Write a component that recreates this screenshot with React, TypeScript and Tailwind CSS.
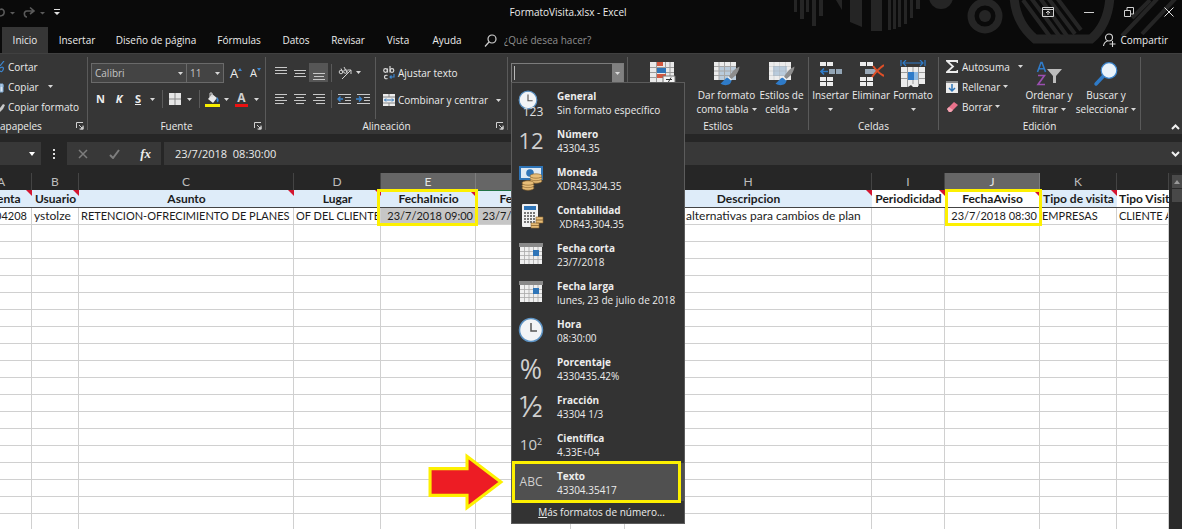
import React from 'react';

type P = { children?: React.ReactNode };

const Caret = ({ className = '' }: { className?: string }) => (
  <svg viewBox="0 0 5 3" className={'inline-block h-[3px] w-[5px] shrink-0 fill-[#d8d8d8] ' + className} aria-hidden="true">
    <path d="M0 0h5L2.500 3z" />
  </svg>
);

const Launcher = () => (
  <svg viewBox="0 0 8 8" className="h-[8px] w-[8px]" fill="none" stroke="#d0d0d0" aria-hidden="true">
    <path d="M.5 6V.5H7M3 3l3 3M7 3.5V7H3.5" />
    <path d="M7.500 4v3.500H4z" fill="#d0d0d0" stroke="none" />
  </svg>
);

const Lines = ({ widths, align = 'l', top = 0, gap = 3 }: { widths: number[]; align?: string; top?: number; gap?: number }) => (
  <svg viewBox="0 0 14 14" className="h-[14px] w-[14px]" fill="#c8c8c8" aria-hidden="true">
    {widths.map((w, i) => (
      <rect key={i} x={align === 'l' ? 1 : align === 'c' ? 7 - w / 2 : 13 - w} y={top + i * gap} width={w} height={1} />
    ))}
  </svg>
);

const Indent = ({ right = false }: { right?: boolean }) => (
  <svg viewBox="0 0 15 13" className="h-[13px] w-[15px]" aria-hidden="true">
    <path d="M1 1.500h13M8 4.500h6M8 7.500h6M1 10.500h13" stroke="#c8c8c8" />
    {right ? (
      <path d="M0 6h5M3 3.500 5.500 6 3 8.500" stroke="#3d86cf" strokeWidth="1.400" fill="none" />
    ) : (
      <path d="M6 6H1M3.500 3.500 1 6l2.500 2.500" stroke="#3d86cf" strokeWidth="1.400" fill="none" />
    )}
  </svg>
);

const Group = ({ label, width, launcher, children, labelClass = 'text-center' }: P & { label: string; width: string; launcher?: boolean; labelClass?: string }) => (
  <section aria-label={label} className={'flex shrink-0 flex-col border-r border-[#5a5a5a] ' + width}>
    <div className="flex min-h-0 flex-1">{children}</div>
    <div className="relative -mb-[3px] shrink-0">
      <div className={'h-[14px] leading-[14px] ' + labelClass}>{label}</div>
      {launcher && (
        <button aria-label={label + ': más opciones'} className="absolute right-[3px] top-[3px]">
          <Launcher />
        </button>
      )}
    </div>
  </section>
);

const BigButton = ({ icon, a, b, width, caret = true }: { icon: React.ReactNode; a: string; b?: string; width: string; caret?: boolean }) => (
  <button className={'flex shrink-0 flex-col items-center pt-[2px] ' + width}>
    <span className="flex h-[29px] shrink-0 items-center">{icon}</span>
    <span className="h-[14px] shrink-0 whitespace-nowrap leading-[14px]">{a}</span>
    <span className="flex h-[14px] shrink-0 items-center gap-[3px] whitespace-nowrap leading-[14px]">
      {b}
      {caret && <Caret />}
    </span>
  </button>
);

const CondIcon = () => (
  <svg viewBox="0 0 26 26" className="h-[26px] w-[26px]" aria-hidden="true">
    <path d="M0 1h24v21H0z" fill="#e9e9e9" />
    <path d="M6.500 1v21M15.500 1v21M20 1v21M0 6.500h24M0 11.500h24M0 16.500h24" stroke="#9b9b9b" />
    <path d="M7 1h6v4H7zM7 13h9v4H7z" fill="#d2573f" />
    <path d="M7 7h9v5H7z" fill="#2f75b8" />
    <path d="M13 15h12v10H13z" fill="#f4f4f4" stroke="#777" />
    <path d="M16 18.500h6M16 21.500h6M21 16.500l-4 7" stroke="#333" />
  </svg>
);

const BrushGrid = ({ fill }: { fill: boolean }) => (
  <svg viewBox="0 0 28 27" className="h-[27px] w-[28px]" aria-hidden="true">
    <path d="M1 2h22v18H1z" fill="#ececec" />
    <path d={fill ? 'M5 6h14v10H5z' : 'M6 6h17v14H6z'} fill="#b9cbdc" />
    <path d="M6 2v18M11.500 2v18M17.500 2v18M1 6.500h22M1 11h22M1 15.500h22" stroke="#a6a6a6" strokeWidth={fill ? 0.3 : 1} />
    <path d="M26.500 6.500c-5 2-9 7-10.500 10.500l2.500 2c4-3 7.500-7 8-12.500z" fill="#8d8d8d" />
    <path d="M15.500 17.500c-3 0-4 3-8 6 4 3 11 2 11-3.500z" fill="#2f7bc8" />
    <path d="m15 17 3.500 3" stroke="#eee" strokeWidth="1.500" />
  </svg>
);

const InsertIcon = ({ del = false }: { del?: boolean }) => (
  <svg viewBox="0 0 26 26" className="h-[26px] w-[26px]" aria-hidden="true">
    <g fill="#ececec">
      <path d="M2 1h6v4H2zM9 1h6v4H9zM2 16h6v4H2zM9 16h6v4H9zM2 21h6v4H2zM9 21h6v4H9z" />
    </g>
    {del ? (
      <>
        <path d="M7 8h11v5H7z" fill="#9aa9b8" />
        <path d="M15 5c3 4 7 8 11 10M26 4c-5 3-9 8-12 12" stroke="#e04f27" strokeWidth="2" fill="none" />
      </>
    ) : (
      <>
        <path d="M11 8h6v5h-6zM18 8h6v5h-6z" fill="#93a5b5" />
        <path d="M10 10.500H3M6 7.500 3 10.500l3 3" stroke="#2f7bc8" strokeWidth="1.700" fill="none" />
      </>
    )}
  </svg>
);

const FormatIcon = () => (
  <svg viewBox="0 0 26 28" className="h-[28px] w-[26px]" aria-hidden="true">
    <path d="M3 3h20M6 0 3 3l3 3M20 0l3 3-3 3M1 0v6M25 0v6" stroke="#2f7bc8" strokeWidth="1.200" fill="none" />
    <path d="M1 7h24v17h-7v3h-5l-2-2-3 2H1z" fill="#ececec" />
    <path d="M7.500 7v20M13 7v17M18.500 7v19M1 12.500h24M1 18.500h24" stroke="#9b9b9b" />
    <path d="M8 12h10v8H8z" fill="#2f7bc8" />
    <path d="M14 12h4v8h-4z" fill="#8fbbe4" />
  </svg>
);

const SortIcon = () => (
  <svg viewBox="0 0 26 26" className="h-[26px] w-[26px]" fill="none" aria-hidden="true">
    <path d="M1.500 11 5 1.500h1L9.500 11M2.800 7.800h5.400" stroke="#2f7bc8" strokeWidth="1.600" />
    <path d="M2 14.500h6.500L2 23.500h7" stroke="#9a4fb0" strokeWidth="1.600" />
    <path d="M11 8h15l-6 7v7h-3v-7z" fill="#bdbdbd" />
  </svg>
);

const FindIcon = () => (
  <svg viewBox="0 0 26 26" className="h-[26px] w-[26px]" aria-hidden="true">
    <path d="M10.500 15 3 23" stroke="#2f7bc8" strokeWidth="3.500" strokeLinecap="round" />
    <circle cx="16" cy="9.500" r="7.800" fill="#eaf3fb" stroke="#3d86cf" strokeWidth="1.200" />
  </svg>
);

const Clock = ({ size }: { size: string }) => (
  <svg viewBox="0 0 26 26" className={size} aria-hidden="true">
    <circle cx="13" cy="13" r="11.500" fill="#f2f4f6" stroke="#5d93c4" strokeWidth="1.500" />
    <path d="M13 6v8h6" stroke="#555" strokeWidth="1.500" fill="none" />
  </svg>
);

const Coins = () => (
  <g fill="#e7bd78" stroke="#8f6a34" strokeWidth=".7">
    <ellipse cx="18" cy="16" rx="6" ry="2.200" />
    <ellipse cx="18" cy="13.500" rx="6" ry="2.200" />
    <ellipse cx="18" cy="11" rx="6" ry="2.200" />
    <ellipse cx="10" cy="23" rx="6" ry="2.200" />
    <ellipse cx="10" cy="20.500" rx="6" ry="2.200" />
    <ellipse cx="10" cy="18" rx="6" ry="2.200" />
  </g>
);

const MoneyIcon = () => (
  <svg viewBox="0 0 26 26" className="h-[26px] w-[26px]" aria-hidden="true">
    <path d="M1 1h24v14H1z" fill="#2f75b8" />
    <path d="M3 3h20v10H3z" fill="#dfeaf4" />
    <circle cx="12" cy="8" r="3.800" fill="#2f75b8" />
    <path d="M1 1h4L1 5zM25 1h-4l4 4zM1 15h4l-4-4z" fill="#2f75b8" />
    <Coins />
  </svg>
);

const CalcIcon = () => (
  <svg viewBox="0 0 26 26" className="h-[26px] w-[26px]" aria-hidden="true">
    <rect x="4" y="1" width="16" height="23" rx="1" fill="#f1f1f1" />
    <path d="M6 3h12v4H6z" fill="#2f75b8" />
    <g fill="#777">
      {[9, 12, 15, 18].map((y) => [6, 9, 12, 15].map((x) => <rect key={x + '-' + y} x={x} y={y} width="2" height="2" />))}
    </g>
    <g fill="#e7bd78" stroke="#8f6a34" strokeWidth=".6">
      <path d="M18 14h7v3h-7zM18 17h7v3h-7zM13 20h8v2.500h-8zM13 22.500h8V25h-8z" />
    </g>
  </svg>
);

const CalendarIcon = () => (
  <svg viewBox="0 0 24 22" className="h-[22px] w-[24px]" aria-hidden="true">
    <path d="M0 0h24v4H0z" fill="#8a8a8a" />
    <path d="M1 4h22v17H1z" fill="#f0f0f0" />
    <path d="M5.500 4v17M10 4v17M14.500 4v17M19 4v17M1 8.500h22M1 12.500h22M1 16.500h22" stroke="#a9a9a9" strokeWidth=".8" />
    <path d="M14 7h6v6h-6z" fill="#2f75b8" />
  </svg>
);

const glyph = 'text-[#cfcfcf] leading-none';

const formats: { name: string; sample: string; icon: React.ReactNode }[] = [
  {
    name: 'General',
    sample: 'Sin formato específico',
    icon: (
      <span className="flex flex-col items-center pt-[4px]">
        <span className="-mb-[4px] mr-[6px] flex">
          <Clock size="h-[20px] w-[20px]" />
        </span>
        <span className="pl-[4px] text-[12px] leading-[12px] text-[#e0e0e0]">123</span>
      </span>
    ),
  },
  { name: 'Número', sample: '43304.35', icon: <span className={'text-[22px] ' + glyph}>12</span> },
  { name: 'Moneda', sample: 'XDR43,304.35', icon: <MoneyIcon /> },
  { name: 'Contabilidad', sample: ' XDR43,304.35', icon: <CalcIcon /> },
  { name: 'Fecha corta', sample: '23/7/2018', icon: <CalendarIcon /> },
  { name: 'Fecha larga', sample: 'lunes, 23 de julio de 2018', icon: <CalendarIcon /> },
  { name: 'Hora', sample: '08:30:00', icon: <Clock size="h-[26px] w-[26px]" /> },
  { name: 'Porcentaje', sample: '4330435.42%', icon: <span className={'text-[27px] ' + glyph}>%</span> },
  { name: 'Fracción', sample: '43304 1/3', icon: <span className={'text-[30px] ' + glyph}>½</span> },
  {
    name: 'Científica',
    sample: '4.33E+04',
    icon: (
      <span className={'text-[15px] ' + glyph}>
        10<sup className="text-[9px]">2</sup>
      </span>
    ),
  },
  { name: 'Texto', sample: '43304.35417', icon: <span className={'text-[12px] ' + glyph}>ABC</span> },
];

const FormatMenu = () => (
  <div className="absolute -left-px top-full z-20 w-[174px] border border-[#5c5c5c] bg-[#333333]" role="menu" aria-label="Formato de número">
    {formats.map((f) => {
      const active = f.name === 'Texto';
      return (
        <button
          key={f.name}
          role="menuitem"
          className={'relative flex h-[38px] w-full items-center text-left ' + (active ? 'bg-[#505050]' : '')}
        >
          <span className="flex w-[38px] shrink-0 justify-center">{f.icon}</span>
          <span className="flex flex-col whitespace-pre pl-[7px] pt-[2px] leading-[14px]">
            <b className="font-bold">{f.name}</b>
            <span>{f.sample}</span>
          </span>
          {active && (
            <>
              <span className="absolute -bottom-[2px] -top-[2px] left-0 right-[3px] border-[3px] border-[#fdf001]" />
              <svg viewBox="0 0 74 56" className="absolute -left-[84px] -top-[10px] h-[58px] w-[76px]" aria-hidden="true">
                <path d="M2 15h36V3l33 25-33 25V41H2z" fill="#ed1c24" stroke="#fdf001" strokeWidth="3" />
              </svg>
            </>
          )}
        </button>
      );
    })}
    <button role="menuitem" className="block h-[22px] w-full pl-[7px] text-center leading-[22px]">
      <u>M</u>ás formatos de número...
    </button>
  </div>
);

const Pattern = () => (
  <svg viewBox="0 0 402 53" className="absolute right-0 top-0 h-[53px] w-[402px]" aria-hidden="true">
    <g fill="#252525">
      <path d="M14 0h3v12h-3zM20 0h4v19h-4zM26 0h3v12h-3zM32 0h4v26h-4zM39 0h4v16h-4zM56 0h6v10zM70 0h12v27l-12-5zM91 0h11v31H91zM108 0h3v30h-3zM113 0h3v29h-3zM118 0h3v27h-3zM124 0h3v24h-3zM130 0h3v18h-3zM136 0h4v9h-4z" />
      <circle cx="161" cy="-3" r="12" />
      <circle cx="205" cy="16" r="6" />
    </g>
    <circle cx="205" cy="16" r="14" fill="none" stroke="#252525" strokeWidth="7" />
    <g fill="none" stroke="#252525">
      <path d="M234 -4c1 20 9 33 21 43h56c12-10 18-24 19-43" strokeWidth="9" />
      <path d="m243 0 28 38M251-2l29 39M260-2l27 38M268-2l27 36M277-2l24 32" strokeWidth="4" />
      <path d="m342 36 36-38M362 34l34-36M352 18l18-18" strokeWidth="4" />
    </g>
  </svg>
);

const TitleBar = () => (
  <header className="relative bg-[#0a0a0a]">
    <Pattern />
    <div className="relative grid h-[27px] grid-cols-3 items-center pb-[3px]">
      <div className="flex items-center gap-[6px]">
        <svg viewBox="0 0 48 12" className="h-[12px] w-[48px]" fill="none" stroke="#5a5a5a" strokeWidth="1.600" aria-hidden="true">
          <path d="M0 3.500c5-2 6 6 0 6.500M34 5h-7c-4 0-3 6 0 6M30 1.500 34 5l-4 3" />
          <path d="M10 6h5l-2.500 2.500zM40 6h5l-2.500 2.500z" fill="#5a5a5a" stroke="none" />
        </svg>
        <svg viewBox="0 0 6 6" className="h-[6px] w-[6px] fill-[#e0e0e0]" aria-hidden="true">
          <path d="M0 0h6v1H0zM0 3h6L3 6z" />
        </svg>
      </div>
      <h1 className="pr-[46px] text-center">FormatoVisita.xlsx - Excel</h1>
      <div className="flex items-center justify-end gap-[30px] pr-[8px]">
        <button aria-label="Opciones de presentación de la cinta">
          <svg viewBox="0 0 12 10" className="h-[10px] w-[12px]" fill="none" stroke="#d0d0d0" aria-hidden="true">
            <path d="M.5.500h11v9H.5zM.5 2.500h11M6 8V4M4 6l2-2 2 2" />
          </svg>
        </button>
        <button aria-label="Minimizar">
          <svg viewBox="0 0 10 10" className="h-[10px] w-[10px]" stroke="#d0d0d0" aria-hidden="true">
            <path d="M0 5.500h10" />
          </svg>
        </button>
        <button aria-label="Restaurar">
          <svg viewBox="0 0 10 10" className="h-[10px] w-[10px]" fill="none" stroke="#d0d0d0" aria-hidden="true">
            <path d="M.5 3.500h6v6h-6zM3 3V.500h6.500V7H7" />
          </svg>
        </button>
        <button aria-label="Cerrar">
          <svg viewBox="0 0 10 10" className="h-[10px] w-[10px]" stroke="#e0e0e0" aria-hidden="true">
            <path d="m.5.500 9 9M9.500.500l-9 9" />
          </svg>
        </button>
      </div>
    </div>
    <nav className="relative flex h-[26px] items-stretch pl-[2px]">
      <button className="w-[46px] bg-[#363636]">Inicio</button>
      <button className="w-[58px]">Insertar</button>
      <button className="w-[100px] whitespace-nowrap">Diseño de página</button>
      <button className="w-[66px]">Fórmulas</button>
      <button className="w-[48px]">Datos</button>
      <button className="w-[56px]">Revisar</button>
      <button className="w-[44px]">Vista</button>
      <button className="w-[54px]">Ayuda</button>
      <label className="flex items-center gap-[7px] pl-[10px]">
        <svg viewBox="0 0 13 13" className="h-[13px] w-[13px]" fill="none" stroke="#d0d0d0" strokeWidth="1.200" aria-hidden="true">
          <circle cx="8" cy="5" r="4" />
          <path d="M5 8 1 12.500" />
        </svg>
        <input aria-label="¿Qué desea hacer?" placeholder="¿Qué desea hacer?" className="w-[110px] bg-transparent outline-none placeholder:text-[#8f8f8f]" />
      </label>
      <button className="ml-auto flex items-center gap-[4px] pr-[14px]">
        <svg viewBox="0 0 13 14" className="h-[14px] w-[13px]" fill="none" stroke="#d8d8d8" strokeWidth="1.100" aria-hidden="true">
          <circle cx="6" cy="4.500" r="3.500" />
          <path d="M.5 13c.5-3 2-4.500 4-5M9.500 8v6M6.500 11h6" />
        </svg>
        Compartir
      </button>
    </nav>
  </header>
);

const Vline = ({ h = 'h-[18px]' }: { h?: string }) => <span className={'w-px bg-[#5a5a5a] ' + h} />;

const Ribbon = () => (
  <div className="flex h-[81px] border-t border-[#404040] bg-[#363636] pb-[4px] pt-[3px]">
    <Group label="apapeles" width="w-[88px]" launcher labelClass="text-left">
      <div className="flex flex-col items-start gap-px">
        {['Cortar', 'Copiar', 'Copiar formato'].map((t, i) => (
          <button key={t} className="flex h-[19px] items-center whitespace-nowrap">
            <svg viewBox="0 0 8 12" className="h-[12px] w-[8px]" aria-hidden="true">
              {i === 0 && <path d="M0 5l4-5M0 7c3-2 4 0 3 2S1 11 0 10" stroke="#3d86cf" fill="none" strokeWidth="1.200" />}
              {i === 1 && <path d="M0 3h3v8H0zM0 5h4" fill="#dfe8f2" stroke="#7ea9d2" />}
              {i === 2 && <path d="M0 7 3 3l2 1-2 4-3 3z" fill="#c8c8c8" />}
            </svg>
            {t}
            {i === 1 && <Caret className="ml-[9px]" />}
          </button>
        ))}
      </div>
    </Group>

    <Group label="Fuente" width="w-[178px]" launcher>
      <div className="flex flex-col gap-[7px] pl-[3px] pt-[6px]">
        <div className="flex h-[20px] items-center">
          <button className="flex h-full w-[96px] items-center justify-between border border-[#6a6a6a] bg-[#444] px-[3px] text-[#c4c4c4]">
            Calibri <Caret />
          </button>
          <button className="-ml-px flex h-full w-[38px] items-center justify-between border border-[#6a6a6a] bg-[#444] px-[3px] text-[#c4c4c4]">
            11 <Caret />
          </button>
          <button className="ml-[6px] flex w-[20px] items-center" aria-label="Aumentar tamaño de fuente">
            <span className="text-[13px]">A</span>
            <svg viewBox="0 0 4 3" className="mb-[8px] h-[3px] w-[4px] fill-[#3d86cf]" aria-hidden="true"><path d="M0 3h4L2 0z" /></svg>
          </button>
          <button className="flex items-center" aria-label="Disminuir tamaño de fuente">
            <span className="text-[11px]">A</span>
            <svg viewBox="0 0 4 3" className="mb-[8px] h-[3px] w-[4px] fill-[#3d86cf]" aria-hidden="true"><path d="M0 0h4L2 3z" /></svg>
          </button>
        </div>
        <div className="flex h-[18px] items-center text-[11px]">
          <button className="w-[19px] text-center font-bold">N</button>
          <button className="w-[18px] text-center font-bold italic">K</button>
          <button className="w-[20px] text-center font-bold underline">S</button>
          <Caret className="ml-[2px] mr-[7px]" />
          <Vline />
          <svg viewBox="0 0 12 12" className="ml-[6px] mr-[6px] h-[12px] w-[12px]" aria-hidden="true">
            <path d="M0 0h12v12H0z" fill="#e6e6e6" />
            <path d="M6 0v12M0 6h12" stroke="#888" />
          </svg>
          <Caret className="mr-[7px]" />
          <Vline />
          <svg viewBox="0 0 15 15" className="ml-[5px] h-[15px] w-[15px]" aria-hidden="true">
            <path d="m3 7 4-5 5 4-4 5z" fill="#e8e8e8" />
            <path d="M5 5V1h2v4" stroke="#ccc" fill="none" />
            <path d="M12 5c2 2 2 4 1 5s-2-2-1-5z" fill="#3d86cf" />
            <path d="M0 12h15v3H0z" fill="#f7ee00" />
          </svg>
          <Caret className="ml-[4px] mr-[6px]" />
          <button className="flex w-[13px] flex-col items-center border-b-[3px] border-[#ed1111] text-[12px] font-bold leading-[12px] text-[#d0d0d0]">A</button>
          <Caret className="ml-[6px]" />
        </div>
      </div>
    </Group>

    <Group label="Alineación" width="w-[242px]" launcher>
      <div className="flex flex-col gap-[8px] pl-[5px] pt-[6px]">
        <div className="flex h-[19px] items-center">
          <span className="flex w-[19px] justify-center"><Lines widths={[12, 12, 12]} top={1} /></span>
          <span className="flex w-[19px] justify-center"><Lines widths={[12, 10, 12]} align="c" top={4} /></span>
          <span className="flex h-[19px] w-[19px] items-center justify-center bg-[#565656]"><Lines widths={[12, 10, 12]} align="c" top={7} /></span>
          <span className="ml-[3px] flex"><Vline /></span>
          <svg viewBox="0 0 14 14" className="ml-[6px] mr-[4px] h-[14px] w-[14px]" fill="none" stroke="#d0d0d0" aria-hidden="true">
            <path d="M4 13 13 4M13 4v4M13 4H9.500" />
            <circle cx="3" cy="6" r="1.800" />
            <circle cx="7.500" cy="5.500" r="1.800" />
            <path d="m3 2.500 2 4.500M6 1l3 5.500" />
          </svg>
          <Caret />
        </div>
        <div className="flex h-[18px] items-center">
          <span className="flex w-[19px] justify-center"><Lines widths={[12, 9, 12, 9]} top={2} /></span>
          <span className="flex w-[19px] justify-center"><Lines widths={[12, 8, 12, 8]} align="c" top={2} /></span>
          <span className="flex w-[19px] justify-center"><Lines widths={[12, 9, 12, 9]} align="r" top={2} /></span>
          <span className="ml-[3px] flex"><Vline /></span>
          <span className="ml-[5px]"><Indent /></span>
          <span className="ml-[4px]"><Indent right /></span>
        </div>
      </div>
      <div className="ml-[4px] border-l border-[#5a5a5a] pl-[7px] pt-[6px]">
        <button className="flex h-[20px] items-center gap-[3px] whitespace-nowrap">
          <svg viewBox="0 0 12 14" className="h-[14px] w-[12px]" fill="none" stroke="#d8d8d8" strokeWidth="1.200" aria-hidden="true">
            <circle cx="2.500" cy="4.500" r="1.800" />
            <path d="M4.500 2.500v4M7 0v6.500" />
            <circle cx="9" cy="4.500" r="1.800" />
            <path d="M4.500 9.500c-4-1.500-4 4.500 0 3" />
            <path d="M11 8v3H7M8.500 9.500 7 11l1.500 1.500" stroke="#3d86cf" />
          </svg>
          Ajustar texto
        </button>
        <button className="mt-[7px] flex h-[20px] items-center gap-[3px] whitespace-nowrap">
          <svg viewBox="0 0 12 12" className="h-[12px] w-[12px]" aria-hidden="true">
            <path d="M0 0h12v12H0z" fill="#ececec" />
            <path d="M0 3h12M0 9h12M6 0v3M6 9v3" stroke="#888" />
            <path d="M1.500 6h9M3 4.500 1.500 6 3 7.500M9 4.500 10.500 6 9 7.500" stroke="#2f75b8" fill="none" />
          </svg>
          Combinar y centrar
          <Caret className="ml-[5px]" />
        </button>
      </div>
    </Group>

    <Group label="" width="w-[120px]">
      <div className="relative ml-[3px] mt-[6px] flex h-[20px] w-[113px] border border-[#7c7c7c] bg-[#3a3a3a]">
        <input aria-label="Formato de número" className="my-[2px] ml-[2px] min-w-0 flex-1 border-l border-[#b8b8b8] bg-transparent px-[2px] outline-none" />
        <button aria-label="Abrir lista" className="flex w-[11px] items-center justify-center bg-[#808080]"><Caret /></button>
        <FormatMenu />
      </div>
    </Group>

    <Group label="Estilos" width="w-[181px]">
      <BigButton width="w-[69px]" icon={<CondIcon />} a="" b="l" />
      <BigButton width="w-[59px]" icon={<BrushGrid fill={false} />} a="Dar formato" b="como tabla" />
      <BigButton width="w-[51px]" icon={<BrushGrid fill />} a="Estilos de" b="celda" />
    </Group>

    <Group label="Celdas" width="w-[130px]">
      <BigButton width="w-[43px]" icon={<InsertIcon />} a="Insertar" />
      <BigButton width="w-[38px]" icon={<InsertIcon del />} a="Eliminar" />
      <BigButton width="w-[46px]" icon={<FormatIcon />} a="Formato" />
    </Group>

    <Group label="Edición" width="w-[202px]">
      <div className="flex w-[80px] shrink-0 flex-col items-start gap-px pl-[7px]">
        <button className="flex h-[19px] items-center gap-[4px] whitespace-nowrap">
          <svg viewBox="0 0 12 13" className="h-[13px] w-[12px]" fill="none" stroke="#ececec" strokeWidth="1.800" aria-hidden="true">
            <path d="M11.500 3V1H1l6 5.500L1 12h10.500v-2" />
          </svg>
          Autosuma <Caret className="ml-[4px]" />
        </button>
        <button className="flex h-[19px] items-center gap-[4px]">
          <svg viewBox="0 0 12 12" className="h-[12px] w-[12px]" aria-hidden="true">
            <path d="M0 0h12v12H0z" fill="#ececec" />
            <path d="M0 1h12" stroke="#888" strokeWidth="2" />
            <path d="M6 3v7M3 7l3 3 3-3" stroke="#2f75b8" strokeWidth="1.500" fill="none" />
          </svg>
          <span className="flex items-center gap-[3px]">Rellenar <Caret /></span>
        </button>
        <button className="flex h-[19px] items-center gap-[4px]">
          <svg viewBox="0 0 12 12" className="h-[12px] w-[12px]" aria-hidden="true">
            <path d="m1 8 7-7 4 3-7 7H3z" fill="#e8718a" />
            <path d="m1 8 2-2 4 3-2 2H3z" fill="#f3a3b2" />
          </svg>
          <span className="flex items-center gap-[3px]">Borrar <Caret /></span>
        </button>
      </div>
      <BigButton width="w-[60px]" icon={<SortIcon />} a="Ordenar y" b="filtrar" />
      <BigButton width="w-[54px]" icon={<FindIcon />} a="Buscar y" b="seleccionar" />
    </Group>
    <div className="flex flex-1 items-end justify-end pr-[2px]">
      <button aria-label="Contraer la cinta">
        <svg viewBox="0 0 9 6" className="h-[6px] w-[9px]" fill="none" stroke="#f0f0f0" strokeWidth="2" aria-hidden="true">
          <path d="m1 5 3.500-3.500L8 5" />
        </svg>
      </button>
    </div>
  </div>
);

const FormulaBar = () => (
  <div className="mt-[8px] flex h-[23px] items-stretch">
    <button aria-label="Cuadro de nombres" className="flex w-[41px] items-center justify-end bg-[#383838] pr-[6px]">
      <svg viewBox="0 0 6 4" className="h-[4px] w-[6px] fill-white" aria-hidden="true"><path d="M0 0h6L3 4z" /></svg>
    </button>
    <span className="flex w-[26px] flex-col items-center justify-center gap-[2px]">
      <i className="h-[2px] w-[2px] bg-[#ddd]" />
      <i className="h-[2px] w-[2px] bg-[#ddd]" />
      <i className="h-[2px] w-[2px] bg-[#ddd]" />
    </span>
    <div className="flex w-[94px] items-center justify-between bg-[#383838] pl-[11px] pr-[10px]">
      <button aria-label="Cancelar">
        <svg viewBox="0 0 10 10" className="h-[10px] w-[10px]" stroke="#7d7d7d" strokeWidth="1.500" aria-hidden="true"><path d="m1 1 8 8M9 1 1 9" /></svg>
      </button>
      <button aria-label="Introducir">
        <svg viewBox="0 0 11 10" className="h-[10px] w-[11px]" stroke="#7d7d7d" strokeWidth="2" fill="none" aria-hidden="true"><path d="m1 6 3 3 6-8" /></svg>
      </button>
      <button className="font-['Liberation_Serif',serif] text-[13px] font-bold italic leading-none">fx</button>
    </div>
    <div className="ml-[3px] flex flex-1 items-center bg-[#383838] pl-[11px] pr-[2px]">
      <input aria-label="Barra de fórmulas" defaultValue="23/7/2018  08:30:00" className="min-w-0 flex-1 bg-transparent text-[11px] outline-none" />
      <svg viewBox="0 0 9 6" className="h-[6px] w-[9px]" fill="none" stroke="#f0f0f0" strokeWidth="2" aria-hidden="true"><path d="m1 1 3.500 3.500L8 1" /></svg>
    </div>
  </div>
);

type Col = { id: string; w: string; head: string; blue?: boolean; note?: boolean; sel?: boolean; value: string; cell: string; mark?: string };

const cols: Col[] = [
  { id: 'A', w: 'w-[61px]', head: 'Cuenta', blue: true, note: true, value: '04208', cell: 'text-[11px] text-right pr-[4px]' },
  { id: 'B', w: 'w-[47px]', head: 'Usuario', blue: true, note: true, value: 'ystolze', cell: 'text-[12px]' },
  { id: 'C', w: 'w-[215px]', head: 'Asunto', blue: true, note: true, value: 'RETENCION-OFRECIMIENTO DE PLANES', cell: 'text-[11px]' },
  { id: 'D', w: 'w-[87px]', head: 'Lugar', blue: true, note: true, value: 'OF DEL CLIENTE', cell: 'text-[11px]' },
  { id: 'E', w: 'w-[95px]', head: 'FechaInicio', blue: true, note: true, sel: true, value: '23/7/2018 09:00', cell: 'text-[11px] text-right bg-[#c6c6c6]', mark: '-left-[4px] w-[101px]' },
  { id: 'F', w: 'w-[95px]', head: 'FechaFin', blue: true, note: true, sel: true, value: '23/7/2018 09:30', cell: 'text-[11px] text-right bg-[#c6c6c6]' },
  { id: 'G', w: 'w-[54px]', head: '', blue: true, value: '', cell: 'text-[11px]' },
  { id: 'H', w: 'w-[247px]', head: 'Descripcion', blue: true, note: true, value: 'alternativas para cambios de plan', cell: 'text-[12px] pl-[61px]' },
  { id: 'I', w: 'w-[73px]', head: 'Periodicidad', note: true, value: '', cell: 'text-[11px]' },
  { id: 'J', w: 'w-[95px]', head: 'FechaAviso', note: true, sel: true, value: '23/7/2018 08:30', cell: 'text-[11px] text-right', mark: 'left-0 w-[97px]' },
  { id: 'K', w: 'w-[77px]', head: 'Tipo de visita', blue: true, note: true, value: 'EMPRESAS', cell: 'text-[11px]' },
  { id: 'L', w: '', head: 'Tipo Visit', value: 'CLIENTE A', cell: 'text-[11px]' },
];

const Sheet = () => (
  <div className="flex flex-1 overflow-hidden pt-[8px]">
    <div className="-ml-[29px] min-w-0 flex-1 overflow-hidden">
      <table className="w-full table-fixed border-separate border-spacing-0 bg-white font-['Lato','Noto_Sans',sans-serif] text-[12px] leading-[16px] text-[#1c1c1c]">
        <colgroup>
          {cols.map((c) => <col key={c.id} className={c.w} />)}
        </colgroup>
        <thead>
          <tr>
            {cols.map((c) => (
              <th key={c.id} className={'h-[17px] border-r p-0 font-normal ' + (c.sel ? 'border-[#7c7c7c] bg-[#666666] text-[#e4e4e4]' : 'border-[#444444] bg-[#262626] text-[#bdbdbd]')}>
                {c.id === 'L' ? '' : c.id}
              </th>
            ))}
          </tr>
          <tr>
            {cols.map((c) => (
              <th key={c.id} className={'relative h-[18px] whitespace-nowrap border-b border-b-[#444] p-0 font-bold ' + (c.sel ? 'border-t border-t-[#217346] ' : '') + (c.blue ? 'bg-[#deecf9] ' : 'bg-white ') + (c.id === 'L' ? 'pl-[2px] text-left' : 'text-center')}>
                {c.head}
                {c.note && (
                  <svg viewBox="0 0 6 6" className="absolute right-0 top-0 h-[6px] w-[6px] fill-[#d4152f]" aria-hidden="true"><path d="M0 0h6v6z" /></svg>
                )}
                {c.mark && <span className={'absolute -top-[2px] z-10 h-[37px] border-[3px] border-[#fdf001] ' + c.mark} />}
              </th>
            ))}
          </tr>
        </thead>
        <tbody>
          <tr>
            {cols.map((c) => (
              <td key={c.id} className={'h-[17px] overflow-hidden whitespace-nowrap border-b border-r border-[#d0d0d0] p-0 px-[2px] leading-[16px] ' + c.cell}>
                {c.value}
              </td>
            ))}
          </tr>
          {Array.from({ length: 19 }, (_, r) => (
            <tr key={r}>
              {cols.map((c) => <td key={c.id} className="h-[17px] border-b border-r border-[#d0d0d0] p-0" />)}
            </tr>
          ))}
        </tbody>
      </table>
    </div>
    <div className="flex w-[13px] flex-col items-end gap-px bg-[#2a2a2a] pt-[2px]">
      <button aria-label="Desplazar arriba" className="flex h-[13px] w-[10px] items-center justify-center bg-[#4a4a4a]">
        <svg viewBox="0 0 6 4" className="h-[4px] w-[6px] fill-[#999]" aria-hidden="true"><path d="M0 4h6L3 0z" /></svg>
      </button>
      <span className="h-[13px] w-[10px] bg-[#484848]" />
    </div>
  </div>
);

export default function App() {
  return (
    <main className="flex h-screen flex-col overflow-hidden bg-[#262626] font-['Open_Sans','Noto_Sans',sans-serif] text-[10px] leading-[14px] text-[#ececec]">
      <TitleBar />
      <Ribbon />
      <FormulaBar />
      <Sheet />
    </main>
  );
}
